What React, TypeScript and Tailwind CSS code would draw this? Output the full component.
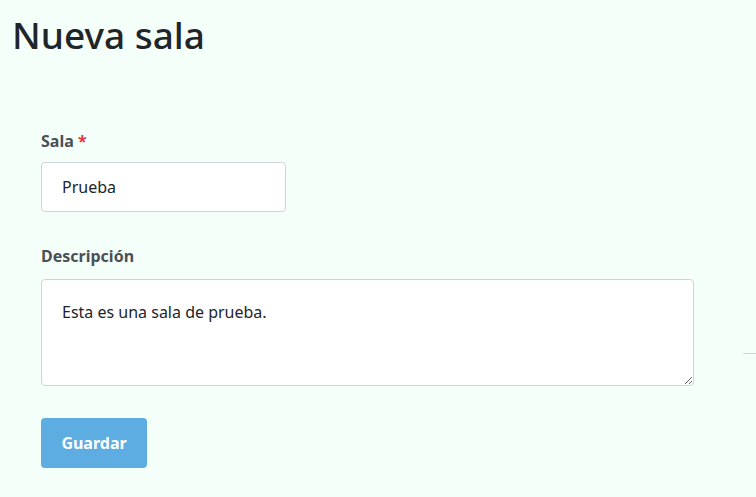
export default function App() {
  return (
    <div className="min-h-[497px] w-full bg-[#f5fffa] font-['Noto_Sans',sans-serif] text-[#212529] relative overflow-hidden">
      <h1 className="pl-3 pt-[11px] text-[37px] leading-[48px] font-medium">Nueva sala</h1>

      <form className="pl-[41px] pt-[70px] flex flex-col">
        <label className="text-[16px] font-bold text-[#4a4f55] leading-6">
          Sala <span className="text-[#dc3545]">*</span>
        </label>
        <input
          defaultValue="Prueba"
          className="mt-[9px] w-[245px] h-[50px] px-5 bg-white border border-[#ced4da] rounded-[4px] text-[16px] outline-none"
        />

        <label className="mt-[32px] text-[16px] font-bold text-[#4a4f55] leading-6">Descripción</label>
        <textarea
          defaultValue="Esta es una sala de prueba."
          className="mt-[11px] w-[653px] h-[107px] px-5 pt-[20px] bg-white border border-[#ced4da] rounded-[4px] text-[16px] leading-6 outline-none"
        />

        <div className="mt-[32px]">
          <button
            type="button"
            className="w-[106px] h-[50px] bg-[#5dade2] text-white font-bold text-[16px] rounded-[4px]"
          >
            Guardar
          </button>
        </div>
      </form>

      <div className="absolute left-[743px] top-[353px] w-[13px] h-px bg-[#d0d7dc]" />
    </div>
  );
}
